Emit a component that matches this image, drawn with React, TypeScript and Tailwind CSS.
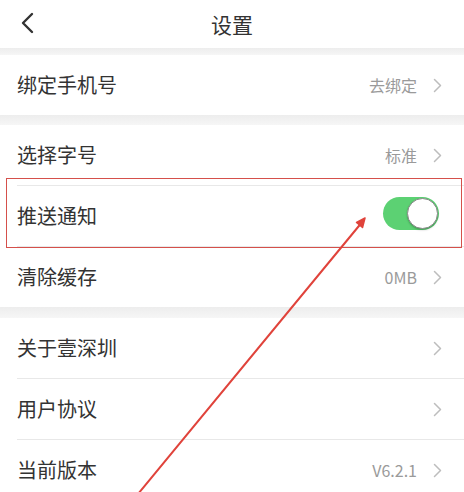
import React from "react";

const font = { fontFamily: '"Noto Sans CJK SC", "Noto Sans", sans-serif' };

function Chevron() {
  return (
    <svg width="9" height="15" viewBox="0 0 9 15" className="shrink-0">
      <path d="M1.5 1.5 L7.5 7.5 L1.5 13.5" fill="none" stroke="#bdbdbd" strokeWidth="1.5" strokeLinecap="round" strokeLinejoin="round" />
    </svg>
  );
}

function Row({ label, value, chevron = true, children }: { label: string; value?: string; chevron?: boolean; children?: React.ReactNode }) {
  return (
    <div className="flex h-[60px] items-center justify-between bg-white pl-[17px] pr-[22px]">
      <span className="text-[20px] leading-none text-[#333333]">{label}</span>
      <div className="flex items-center gap-[16px]">
        {value && <span className="text-[16px] leading-none text-[#9a9a9a]">{value}</span>}
        {children}
        {chevron && <Chevron />}
      </div>
    </div>
  );
}

function Divider() {
  return (
    <div className="h-px bg-white pl-[17px]">
      <div className="h-px bg-[#e8e8e8]" />
    </div>
  );
}

function Band({ h }: { h: string }) {
  return <div className={`${h} bg-gradient-to-b from-[#ededed] to-[#f6f6f6]`} />;
}

function Toggle() {
  return (
    <div className="mr-[3px] mt-[-5px] flex h-[33px] w-[56px] items-center justify-end rounded-full bg-[#5cd173] p-[1px]">
      <div className="h-[31px] w-[31px] rounded-full border border-[#8a8a8a] bg-white shadow-[0_1px_2px_rgba(0,0,0,0.25)]" />
    </div>
  );
}

export default function App() {
  return (
    <div className="relative h-[492px] w-[464px] overflow-hidden bg-white" style={font}>
      <div className="relative flex h-[48px] items-center justify-center bg-white">
        <svg width="14" height="22" viewBox="0 0 14 22" className="absolute left-[20px] top-[12px]">
          <path d="M12 2 L3 11 L12 20" fill="none" stroke="#333333" strokeWidth="2.4" strokeLinecap="round" strokeLinejoin="round" />
        </svg>
        <span className="text-[21px] leading-none text-[#333333]">设置</span>
      </div>
      <Band h="h-[7px]" />
      <Row label="绑定手机号" value="去绑定" />
      <Band h="h-[10px]" />
      <Row label="选择字号" value="标准" />
      <Divider />
      <Row label="推送通知" chevron={false}>
        <Toggle />
      </Row>
      <Divider />
      <Row label="清除缓存" value="0MB" />
      <Band h="h-[11px]" />
      <Row label="关于壹深圳" />
      <Divider />
      <Row label="用户协议" />
      <Divider />
      <Row label="当前版本" value="V6.2.1" />

      {/* highlight frame around the push-notification row */}
      <div className="pointer-events-none absolute left-[6px] top-[178px] h-[70px] w-[456px] border-[1.5px] border-[#d5504b]" />

      {/* pointer arrow */}
      <svg width="464" height="492" className="pointer-events-none absolute left-0 top-0">
        <line x1="138" y1="494" x2="363" y2="221" stroke="#e0433b" strokeWidth="2" strokeLinecap="round" />
        <path d="M365 218 L356.5 222.5 L362.5 227.5 Z" fill="#e0433b" stroke="#e0433b" strokeWidth="1.5" strokeLinejoin="round" />
      </svg>
    </div>
  );
}
